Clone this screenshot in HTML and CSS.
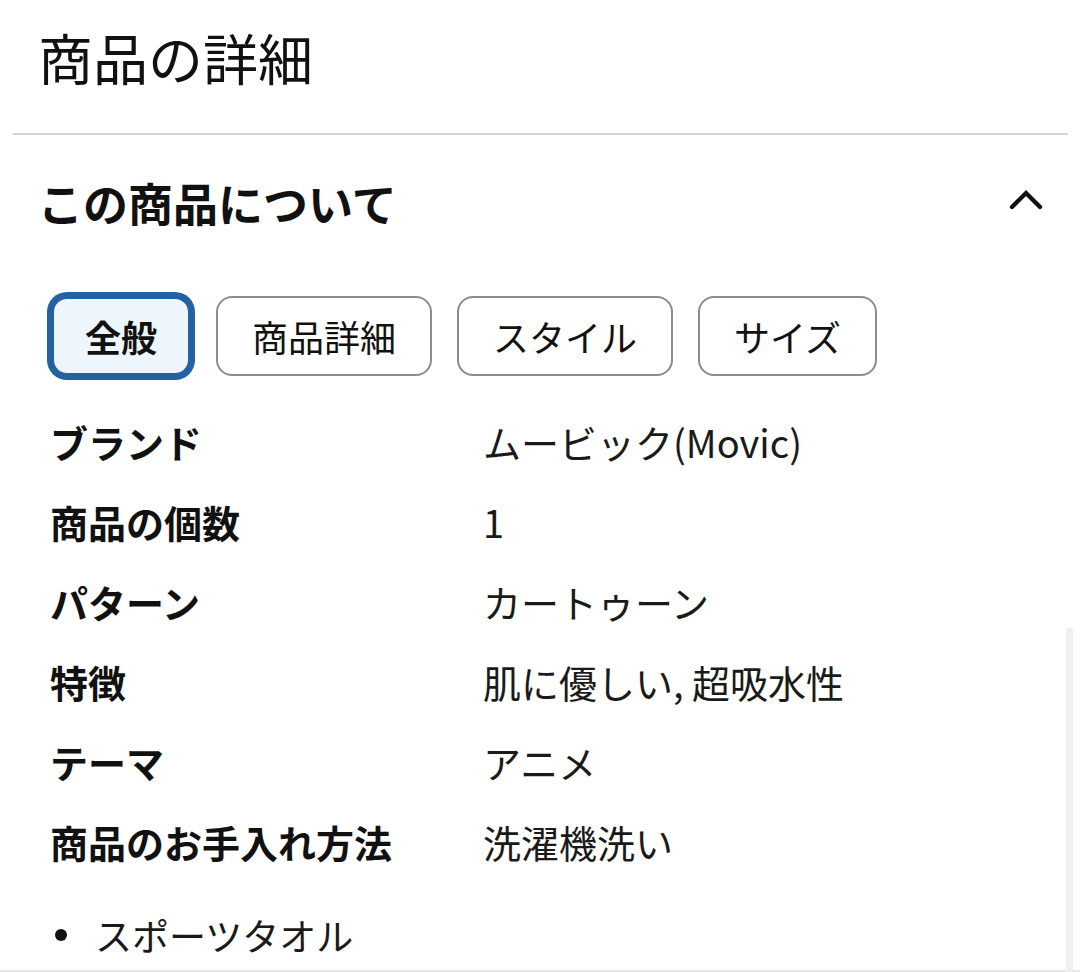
FILE: index.html
```html
<!DOCTYPE html>
<html lang="ja">
<head>
<meta charset="utf-8">
<title>商品の詳細</title>
<link rel="stylesheet" href="styles.css">
</head>
<body>
<div class="page">
  <h1 class="title">商品の詳細</h1>
  <div class="divider"></div>
  <div class="section-head">
    <h2 class="section-title">この商品について</h2>
    <svg class="chevron" width="40" height="40" viewBox="0 0 40 40" aria-hidden="true">
      <path d="M6 28 L20 14 L34 28" fill="none" stroke="#111" stroke-width="4.4" stroke-linecap="round" stroke-linejoin="miter"/>
    </svg>
  </div>
  <div class="tabs">
    <button class="tab tab-active">全般</button>
    <button class="tab">商品詳細</button>
    <button class="tab">スタイル</button>
    <button class="tab">サイズ</button>
  </div>
  <div class="specs">
    <div class="spec-label">ブランド</div><div class="spec-value">ムービック(Movic)</div>
    <div class="spec-label">商品の個数</div><div class="spec-value">1</div>
    <div class="spec-label">パターン</div><div class="spec-value">カートゥーン</div>
    <div class="spec-label">特徴</div><div class="spec-value">肌に優しい, 超吸水性</div>
    <div class="spec-label">テーマ</div><div class="spec-value">アニメ</div>
    <div class="spec-label">商品のお手入れ方法</div><div class="spec-value">洗濯機洗い</div>
  </div>
  <ul class="bullets">
    <li class="bullet">スポーツタオル</li>
  </ul>
  <div class="bottom-line"></div>
  <div class="scroll-track"></div>
</div>
</body>
</html>
```

FILE: styles.css
```css
html, body {
  margin: 0;
  padding: 0;
  background: #ffffff;
  overflow: hidden;
}

body {
  font-family: "Noto Sans CJK JP", "Noto Sans", sans-serif;
  color: #111111;
}

.page {
  position: relative;
  width: 1080px;
  height: 972px;
}

.title {
  margin: 0;
  padding: 26px 0 0 38px;
  font-size: 55px;
  line-height: 60px;
  font-weight: 400;
}

.divider {
  margin: 47px 12px 0 13px;
  height: 2px;
  background: #d6d6d6;
}

.section-head {
  display: flex;
  align-items: center;
  justify-content: space-between;
  padding: 38px 34px 0 38px;
}

.section-title {
  margin: 0;
  font-size: 45px;
  line-height: 60px;
  font-weight: 700;
}

.chevron {
  display: block;
  margin-bottom: 8px;
}

.tabs {
  display: flex;
  gap: 25px;
  margin-top: 63px;
  padding-left: 51px;
}

.tab {
  font-family: inherit;
  font-size: 36px;
  line-height: 76px;
  height: 80px;
  padding: 0 34px;
  border: 2px solid #8c8c8c;
  border-radius: 16px;
  background: #ffffff;
  color: #111111;
  font-weight: 400;
}

.tab-active {
  padding: 0 31px;
  line-height: 74px;
  border: 3px solid #2462a3;
  box-shadow: 0 0 0 4px #2462a3;
  background: #edf6fd;
  font-weight: 700;
}

.specs {
  display: grid;
  grid-template-columns: 433px 1fr;
  margin-top: 26px;
  padding-left: 50px;
  font-size: 38px;
  line-height: 80px;
}

.spec-label {
  font-weight: 700;
  white-space: nowrap;
}

.spec-value {
  font-weight: 400;
  color: #1a1a1a;
  white-space: nowrap;
}

.bullets {
  list-style: none;
  margin: 23px 0 0 0;
  padding: 0 0 0 55px;
}

.bullet {
  display: flex;
  align-items: center;
  gap: 28px;
  font-size: 37px;
  line-height: 60px;
  color: #1a1a1a;
}

.bullet::before {
  content: "";
  width: 12px;
  height: 12px;
  border-radius: 50%;
  background: #111111;
}

.bottom-line {
  margin-top: 5px;
  height: 2px;
  background: #e6e6e6;
}

.scroll-track {
  position: absolute;
  left: 1066px;
  top: 628px;
  width: 7px;
  bottom: 0;
  border-radius: 4px 4px 0 0;
  background: #efefef;
}
```
